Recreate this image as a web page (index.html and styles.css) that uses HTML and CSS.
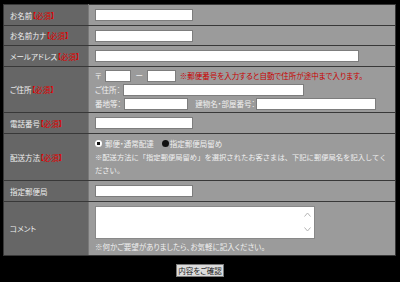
FILE: index.html
```html
<!DOCTYPE html>
<html lang="ja">
<head>
<meta charset="utf-8">
<title>お問い合わせ</title>
<link rel="stylesheet" href="styles.css">
</head>
<body>
<form class="form">
<table class="tbl">
  <tr class="row-std">
    <th>お名前<span class="req">【必須】</span></th>
    <td><input class="field w-short" type="text"></td>
  </tr>
  <tr class="row-std2">
    <th>お名前カナ<span class="req">【必須】</span></th>
    <td><input class="field w-short" type="text"></td>
  </tr>
  <tr class="row-std">
    <th>メールアドレス<span class="req">【必須】</span></th>
    <td><input class="field w-mail" type="text"></td>
  </tr>
  <tr class="row-addr">
    <th>ご住所<span class="req">【必須】</span></th>
    <td>
      <div class="line">
        <span class="sym">〒</span>
        <input class="field w-zip1" type="text">
        <span class="sym">ー</span>
        <input class="field w-zip2" type="text">
        <span class="red">※郵便番号を入力すると自動で住所が途中まで入ります。</span>
      </div>
      <div class="line">
        <span>ご住所：</span>
        <input class="field w-addr" type="text">
      </div>
      <div class="line">
        <span>番地等：</span>
        <input class="field w-banchi" type="text">
        <span class="bldg-label">建物名・部屋番号：</span>
        <input class="field w-bldg" type="text">
      </div>
    </td>
  </tr>
  <tr class="row-std">
    <th>電話番号<span class="req">【必須】</span></th>
    <td><input class="field w-short" type="text"></td>
  </tr>
  <tr class="row-ship">
    <th>配送方法<span class="req">【必須】</span></th>
    <td>
      <div class="radios">
        <label class="opt"><span class="radio on"></span>郵便・通常配達</label>
        <label class="opt"><span class="radio dot"></span>指定郵便局留め</label>
      </div>
      <p class="note">※配送方法に「指定郵便局留め」を選択されたお客さまは、下記に郵便局名を記入してください。</p>
    </td>
  </tr>
  <tr class="row-std">
    <th>指定郵便局</th>
    <td><input class="field w-short" type="text"></td>
  </tr>
  <tr class="row-comment">
    <th>コメント</th>
    <td>
      <div class="textbox">
        <textarea class="ta"></textarea>
        <div class="arrows">
          <svg width="7" height="5" viewBox="0 0 7 5"><path d="M0.5 4.5 L3.5 1 L6.5 4.5" fill="none" stroke="#b5b5b5" stroke-width="1"/></svg>
          <svg width="7" height="5" viewBox="0 0 7 5"><path d="M0.5 0.5 L3.5 4 L6.5 0.5" fill="none" stroke="#b5b5b5" stroke-width="1"/></svg>
        </div>
      </div>
      <p class="note2">※何かご要望がありましたら、お気軽に記入ください。</p>
    </td>
  </tr>
</table>
<div class="actions"><button class="btn" type="button">内容をご確認</button></div>
</form>
</body>
</html>
```
FILE: styles.css
```css
html, body {
  margin: 0;
  padding: 0;
  background: #000;
}
body {
  font-family: "Noto Sans CJK JP", "Noto Sans", sans-serif;
  font-size: 7.5px;
  font-feature-settings: "palt";
  color: #f0f0f0;
  line-height: 1.2;
}
.form {
  padding: 4px 0 0 0;
}
.tbl {
  margin-left: 3px;
  width: 393px;
  border-collapse: collapse;
  border: 1px solid #a8a8a8;
}
.tbl th,
.tbl td {
  border: 1px solid #383838;
  padding: 0 6px;
  vertical-align: middle;
  text-align: left;
  font-weight: normal;
}
.tbl th {
  width: 72px;
  background: #666;
  color: #eee;
  white-space: nowrap;
  border-right-color: #7a7a7a;
}
.tbl td {
  background: #9b9b9b;
}
.req {
  color: #e00000;
}
.red {
  color: #c80000;
  white-space: nowrap;
}
.row-std th, .row-std td { height: 20px; }
.row-std2 th, .row-std2 td { height: 19px; }
.row-addr th, .row-addr td { height: 45px; }
.row-ship th, .row-ship td { height: 46px; }
.row-comment th, .row-comment td { height: 53px; }

.field {
  display: block;
  box-sizing: border-box;
  height: 12px;
  margin: 0;
  padding: 0;
  border: 1px solid #7d7d7d;
  background: #fff;
  font: inherit;
}
.w-short { width: 98px; }
.w-mail { width: 264px; }
.w-zip1 { width: 26px; }
.w-zip2 { width: 29px; }
.w-addr { width: 181px; }
.w-banchi { width: 64px; }
.w-bldg { width: 120px; }

.line {
  display: flex;
  align-items: center;
  height: 14px;
  white-space: nowrap;
}
.line .sym { margin: 0 4px 0 0; }
.line .field { margin-right: 4px; }
.line span { margin-right: 3px; }
.line .bldg-label { margin-left: 3px; margin-right: 1px; }

.radios {
  display: flex;
  align-items: center;
  gap: 8px;
  height: 13px;
}
.opt {
  display: flex;
  align-items: center;
}
.radio {
  display: inline-block;
  box-sizing: border-box;
  width: 7px;
  height: 7px;
  border-radius: 50%;
  margin-right: 3px;
}
.radio.on {
  background: radial-gradient(circle, #111 0 1.6px, #fff 1.8px);
}
.radio.dot {
  background: #111;
  margin-right: 1px;
}
.note {
  margin: 1px 0 0;
  line-height: 13px;
  font-size: 7.3px;
  font-feature-settings: normal;
}
.textbox {
  display: flex;
  width: 220px;
  height: 33px;
  box-sizing: border-box;
  background: #fff;
  border: 1px solid #888;
  margin-top: 1px;
}
.ta {
  flex: 1;
  border: 0;
  margin: 0;
  padding: 0;
  resize: none;
  background: #fff;
  outline: none;
}
.arrows {
  display: flex;
  flex-direction: column;
  justify-content: space-between;
  padding: 5px 3px 6px 0;
}
.arrows svg { display: block; }
.note2 {
  margin: 2px 0 0;
  line-height: 12px;
}
.actions {
  display: flex;
  justify-content: center;
  padding-top: 8px;
}
.btn {
  box-sizing: border-box;
  width: 48px;
  height: 13px;
  padding: 0;
  margin: 0;
  font: inherit;
  font-size: 7.5px;
  line-height: 11px;
  color: #1a1a1a;
  background: #dcdcdc;
  border: 1px solid #7a7a7a;
}
```
